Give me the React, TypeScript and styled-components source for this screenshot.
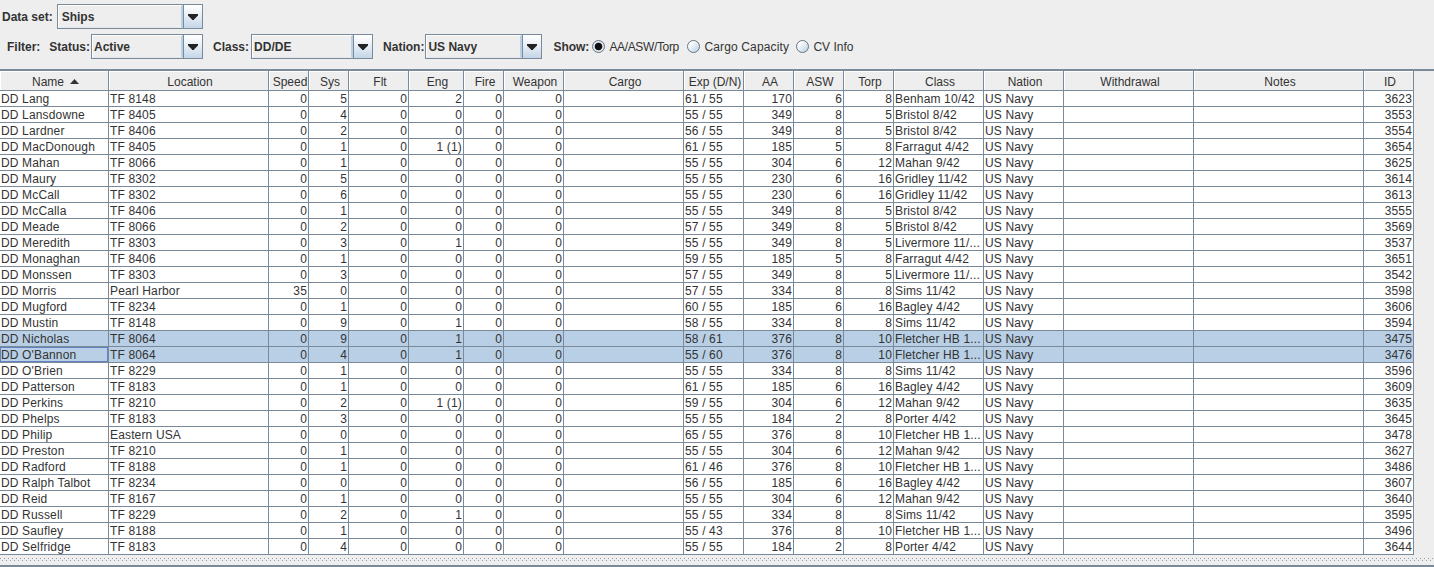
import { styled, createGlobalStyle } from "styled-components";

const GlobalStyle = createGlobalStyle`
  html, body {
    margin: 0;
    padding: 0;
    height: 100%;
    background: #eeeeee;
    overflow: hidden;
  }
  body {
    font-family: "Liberation Sans", Arial, sans-serif;
    font-size: 12px;
    color: #333333;
  }
`;

type Align = "left" | "right" | "center";

const columns: { title: string; width: number; align: Align }[] = [
  { title: "Name", width: 109, align: "left" },
  { title: "Location", width: 160, align: "left" },
  { title: "Speed", width: 40, align: "right" },
  { title: "Sys", width: 40, align: "right" },
  { title: "Flt", width: 60, align: "right" },
  { title: "Eng", width: 55, align: "right" },
  { title: "Fire", width: 40, align: "right" },
  { title: "Weapon", width: 60, align: "right" },
  { title: "Cargo", width: 120, align: "right" },
  { title: "Exp (D/N)", width: 60, align: "left" },
  { title: "AA", width: 50, align: "right" },
  { title: "ASW", width: 50, align: "right" },
  { title: "Torp", width: 50, align: "right" },
  { title: "Class", width: 90, align: "left" },
  { title: "Nation", width: 80, align: "left" },
  { title: "Withdrawal", width: 130, align: "left" },
  { title: "Notes", width: 170, align: "left" },
  { title: "ID", width: 50, align: "right" },
];

// name | location | speed | sys | eng | exp | aa | asw | torp | class | id
const raw = `Lang|TF 8148|0|5|2|61 / 55|170|6|8|Benham 10/42|3623
Lansdowne|TF 8405|0|4|0|55 / 55|349|8|5|Bristol 8/42|3553
Lardner|TF 8406|0|2|0|56 / 55|349|8|5|Bristol 8/42|3554
MacDonough|TF 8405|0|1|1 (1)|61 / 55|185|5|8|Farragut 4/42|3654
Mahan|TF 8066|0|1|0|55 / 55|304|6|12|Mahan 9/42|3625
Maury|TF 8302|0|5|0|55 / 55|230|6|16|Gridley 11/42|3614
McCall|TF 8302|0|6|0|55 / 55|230|6|16|Gridley 11/42|3613
McCalla|TF 8406|0|1|0|55 / 55|349|8|5|Bristol 8/42|3555
Meade|TF 8066|0|2|0|57 / 55|349|8|5|Bristol 8/42|3569
Meredith|TF 8303|0|3|1|55 / 55|349|8|5|Livermore 11/...|3537
Monaghan|TF 8406|0|1|0|59 / 55|185|5|8|Farragut 4/42|3651
Monssen|TF 8303|0|3|0|57 / 55|349|8|5|Livermore 11/...|3542
Morris|Pearl Harbor|35|0|0|57 / 55|334|8|8|Sims 11/42|3598
Mugford|TF 8234|0|1|0|60 / 55|185|6|16|Bagley 4/42|3606
Mustin|TF 8148|0|9|1|58 / 55|334|8|8|Sims 11/42|3594
Nicholas|TF 8064|0|9|1|58 / 61|376|8|10|Fletcher HB 1...|3475
O'Bannon|TF 8064|0|4|1|55 / 60|376|8|10|Fletcher HB 1...|3476
O'Brien|TF 8229|0|1|0|55 / 55|334|8|8|Sims 11/42|3596
Patterson|TF 8183|0|1|0|61 / 55|185|6|16|Bagley 4/42|3609
Perkins|TF 8210|0|2|1 (1)|59 / 55|304|6|12|Mahan 9/42|3635
Phelps|TF 8183|0|3|0|55 / 55|184|2|8|Porter 4/42|3645
Philip|Eastern USA|0|0|0|65 / 55|376|8|10|Fletcher HB 1...|3478
Preston|TF 8210|0|1|0|55 / 55|304|6|12|Mahan 9/42|3627
Radford|TF 8188|0|1|0|61 / 46|376|8|10|Fletcher HB 1...|3486
Ralph Talbot|TF 8234|0|0|0|56 / 55|185|6|16|Bagley 4/42|3607
Reid|TF 8167|0|1|0|55 / 55|304|6|12|Mahan 9/42|3640
Russell|TF 8229|0|2|1|55 / 55|334|8|8|Sims 11/42|3595
Saufley|TF 8188|0|1|0|55 / 43|376|8|10|Fletcher HB 1...|3496
Selfridge|TF 8183|0|4|0|55 / 55|184|2|8|Porter 4/42|3644`;

const rows = raw.split("\n").map((line) => {
  const [name, location, speed, sys, eng, exp, aa, asw, torp, shipClass, id] = line.split("|");
  return {
    key: id,
    cells: [
      "DD " + name, location, speed, sys, "0", eng, "0", "0", "",
      exp, aa, asw, torp, shipClass, "US Navy", "", "", id,
    ],
  };
});

const Combo = ({ value, width, inset = 1 }: { value: string; width: number; inset?: number }) => (
  <ComboBox $width={width}>
    <ComboValue $inset={inset}>{value}</ComboValue>
    <ComboButton>
      <svg width="10" height="6" viewBox="0 0 10 6">
        <path d="M0 0h10v1.5L6 5.5v.5H4v-.5L0 1.5z" fill="#222" />
      </svg>
    </ComboButton>
  </ComboBox>
);

const Radio = ({
  label,
  checked,
  width,
  tracking = 0,
}: {
  label: string;
  checked?: boolean;
  width?: number;
  tracking?: number;
}) => (
  <RadioItem $width={width} $tracking={tracking}>
    <RadioCircle $checked={checked} />
    {label}
  </RadioItem>
);

const App = () => {
  return (
    <Page>
      <GlobalStyle />
      <Toolbar>
        <DataSetRow>
          <Label>Data set:</Label>
          <Combo value="Ships" width={146} inset={3} />
        </DataSetRow>
        <FilterRow>
          <Label>Filter:</Label>
          <Field $offset={9} $gap={1}>
            <Label>Status:</Label>
            <Combo value="Active" width={112} />
          </Field>
          <Field $offset={10} $gap={2}>
            <Label>Class:</Label>
            <Combo value="DD/DE" width={122} />
          </Field>
          <Field $offset={10} $gap={1}>
            <Label>Nation:</Label>
            <Combo value="US Navy" width={117} />
          </Field>
          <ShowGroup>
            <Label>Show:</Label>
            <Radio label="AA/ASW/Torp" checked width={95} tracking={-0.35} />
            <Radio label="Cargo Capacity" width={109} tracking={0.15} />
            <Radio label="CV Info" />
          </ShowGroup>
        </FilterRow>
      </Toolbar>
      <TableArea>
        <ShipTable>
          <colgroup>
            {columns.map((col) => (
              <col key={col.title} width={col.width} />
            ))}
          </colgroup>
          <thead>
            <tr>
              {columns.map((col) => (
                <HeaderCell key={col.title}>
                  {col.title}
                  {col.title === "Name" && (
                    <SortArrow width="9" height="5" viewBox="0 0 9 5">
                      <path d="M4.5 0L9 5H0z" fill="#333" />
                    </SortArrow>
                  )}
                </HeaderCell>
              ))}
            </tr>
          </thead>
          <tbody>
            {rows.map((row) => {
              const selected = row.key === "3475" || row.key === "3476";
              return (
                <tr key={row.key}>
                  {row.cells.map((cell, i) => (
                    <Cell
                      key={columns[i].title}
                      $align={columns[i].align}
                      $selected={selected}
                      $focused={row.key === "3476" && i === 0}
                    >
                      {cell}
                    </Cell>
                  ))}
                </tr>
              );
            })}
          </tbody>
        </ShipTable>
      </TableArea>
      <SplitBar>
        <GripDots />
      </SplitBar>
      <BottomEdge />
    </Page>
  );
};
export default App;

const Page = styled.div`
  display: flex;
  flex-direction: column;
  height: 567px;
  width: 1434px;
  overflow: hidden;
  background: #eeeeee;
`;

const Toolbar = styled.div`
  display: flex;
  flex-direction: column;
  height: 69px;
  padding-top: 4px;
  gap: 5px;
  box-sizing: border-box;
`;

const DataSetRow = styled.div`
  display: flex;
  align-items: center;
  gap: 4px;
  height: 25px;
  padding-left: 2px;
`;

const FilterRow = styled.div`
  display: flex;
  align-items: center;
  height: 25px;
  padding-left: 7px;
`;

const Field = styled.div<{ $offset: number; $gap: number }>`
  display: flex;
  align-items: center;
  gap: ${(p) => p.$gap}px;
  margin-left: ${(p) => p.$offset}px;
`;

const Label = styled.span`
  font-weight: bold;
  color: #333333;
  white-space: nowrap;
`;

const ComboBox = styled.div<{ $width: number }>`
  display: flex;
  width: ${(p) => p.$width}px;
  height: 25px;
  box-sizing: border-box;
  border: 1px solid #7a8a99;
`;

const ComboValue = styled.div<{ $inset: number }>`
  flex: 1;
  display: flex;
  align-items: center;
  padding-left: ${(p) => p.$inset}px;
  font-weight: bold;
  color: #333333;
  border: 1px solid #ffffff;
  border-right: 2px solid #b8cfe5;
  border-bottom-color: #e4e8ec;
  background: #eeeeee;
`;

const ComboButton = styled.div`
  display: flex;
  align-items: center;
  justify-content: center;
  width: 18px;
  border-left: 1px solid #7a8a99;
  background: linear-gradient(#ffffff 0%, #eef3f8 35%, #c4d6e8 100%);
`;

const ShowGroup = styled.div`
  display: flex;
  align-items: center;
  gap: 3px;
  margin-left: 11px;
`;

const RadioItem = styled.label<{ $width?: number; $tracking: number }>`
  display: flex;
  align-items: center;
  gap: 4px;
  width: ${(p) => (p.$width ? p.$width - 3 + "px" : "auto")};
  letter-spacing: ${(p) => p.$tracking}px;
  color: #333333;
  white-space: nowrap;
`;

const RadioCircle = styled.span<{ $checked?: boolean }>`
  display: block;
  width: 13px;
  height: 13px;
  box-sizing: border-box;
  border-radius: 50%;
  border: 1px solid #66757f;
  background: ${(p) =>
    p.$checked
      ? "radial-gradient(circle, #111 0 3.4px, #dfe8f1 4.2px)"
      : "linear-gradient(135deg, #ffffff 20%, #b8cfe5)"};
`;

const TableArea = styled.div`
  height: 486px;
  flex: none;
  overflow: hidden;
  border-top: 2px solid #7a8a99;
  box-sizing: border-box;
`;

const ShipTable = styled.table`
  table-layout: fixed;
  width: 1414px;
  border-collapse: separate;
  border-spacing: 0;
  font-size: 12px;
`;

const HeaderCell = styled.th`
  height: 20px;
  padding: 2px 0 0 3px;
  box-sizing: border-box;
  font-weight: normal;
  text-align: center;
  color: #333333;
  background: #eeeeee;
  border-right: 1px solid #7a8a99;
  border-bottom: 1px solid #7a8a99;
  box-shadow: inset 1px 1px 0 #ffffff;
  white-space: nowrap;
  overflow: hidden;
`;

const SortArrow = styled.svg`
  margin-left: 6px;
  vertical-align: 2px;
`;

const Cell = styled.td<{ $align: Align; $selected: boolean; $focused: boolean }>`
  height: 16px;
  padding: 0 1px;
  box-sizing: border-box;
  line-height: 14px;
  letter-spacing: 0.15px;
  text-align: ${(p) => p.$align};
  color: #333333;
  background: ${(p) => (p.$selected ? "#b8cfe5" : "#ffffff")};
  border-right: 1px solid #7a8a99;
  border-bottom: 1px solid #7a8a99;
  box-shadow: ${(p) => (p.$focused ? "inset 0 0 0 1px #6382bf" : "none")};
  white-space: nowrap;
  overflow: hidden;
`;

const SplitBar = styled.div`
  flex: none;
  height: 10px;
  padding-top: 3px;
  box-sizing: border-box;
`;

const GripDots = styled.div`
  height: 4px;
  background-image:
    radial-gradient(circle at 0.5px 0.5px, #8f9ca9 0.6px, transparent 0.7px),
    radial-gradient(circle at 0.5px 0.5px, #8f9ca9 0.6px, transparent 0.7px);
  background-size: 4px 4px, 4px 4px;
  background-position: 0 0, 2px 2px;
`;

const BottomEdge = styled.div`
  flex: 1;
  background: #7a8a99;
`;
